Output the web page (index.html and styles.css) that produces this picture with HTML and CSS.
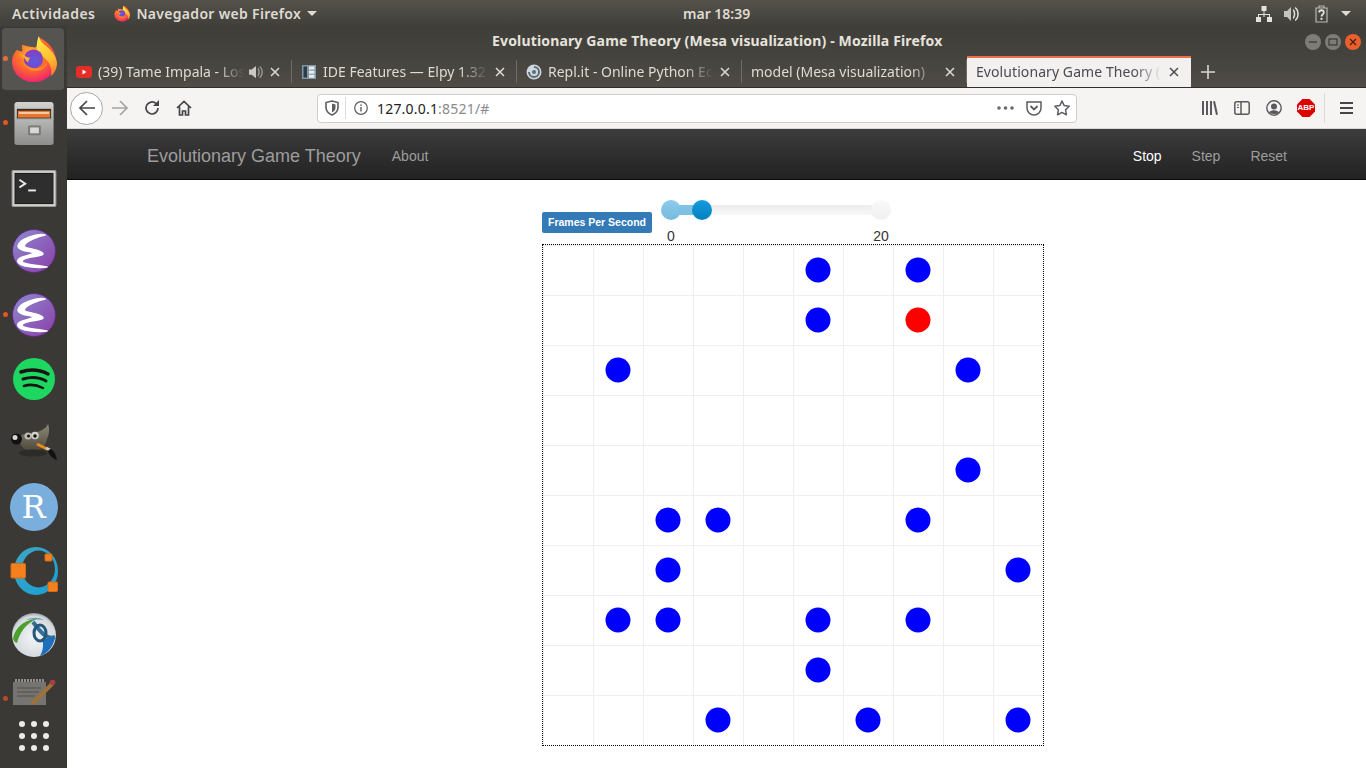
FILE: index.html
```html
<!DOCTYPE html>
<html lang="es">
<head>
<meta charset="utf-8">
<title>Evolutionary Game Theory (Mesa visualization)</title>
<link rel="stylesheet" href="styles.css">
</head>
<body>
<svg class="defs" width="0" height="0" aria-hidden="true">
  <defs>
    <radialGradient id="fx-body" cx="0.45" cy="0.35" r="0.75">
      <stop offset="0" stop-color="#ffb02e"/>
      <stop offset="0.5" stop-color="#ff6a2b"/>
      <stop offset="0.85" stop-color="#f02a6a"/>
      <stop offset="1" stop-color="#d81f8c"/>
    </radialGradient>
    <linearGradient id="fx-flame" x1="0.4" y1="0" x2="0.7" y2="1">
      <stop offset="0" stop-color="#ffe94a"/>
      <stop offset="0.6" stop-color="#ffbd2e"/>
      <stop offset="1" stop-color="#ff7a2e"/>
    </linearGradient>
    <radialGradient id="fx-globe" cx="0.55" cy="0.6" r="0.6">
      <stop offset="0" stop-color="#5a5ce0"/>
      <stop offset="1" stop-color="#8a3bc0"/>
    </radialGradient>
    <linearGradient id="emacs-bg" x1="0" y1="0" x2="1" y2="1">
      <stop offset="0" stop-color="#8d8ad0"/>
      <stop offset="1" stop-color="#8a3ea8"/>
    </linearGradient>
    <linearGradient id="cabinet" x1="0" y1="0" x2="0" y2="1">
      <stop offset="0" stop-color="#d2d2d0"/>
      <stop offset="1" stop-color="#8d8d8b"/>
    </linearGradient>
    <linearGradient id="origin-ring" x1="0" y1="0" x2="1" y2="1">
      <stop offset="0" stop-color="#3fa5c4"/>
      <stop offset="1" stop-color="#17a0d6"/>
    </linearGradient>
    <radialGradient id="globe-bg" cx="0.5" cy="0.55" r="0.6">
      <stop offset="0" stop-color="#f4f6f8"/>
      <stop offset="0.8" stop-color="#d4d9de"/>
      <stop offset="1" stop-color="#6d7378"/>
    </radialGradient>
    <linearGradient id="gimp-head" x1="0" y1="0" x2="0" y2="1">
      <stop offset="0" stop-color="#8f8975"/>
      <stop offset="1" stop-color="#4c483c"/>
    </linearGradient>
    <symbol id="firefox" viewBox="0 0 48 48">
      <path fill="url(#fx-body)" d="M12 9c-1 3-.6 5 .4 6.600C10 16.500 7.500 15 6 14.500 3 18 1 22 1 26.500 1 38.500 11 48 24 48s23-9.500 23-22C47 15 39 5 28 1c2 5 1 9-3 11-4-1-9-1-13-3z"/>
      <path fill="url(#fx-flame)" d="M29 0c1 5 4 8 8 11 6 5 11 11 11 18 0 5-3 10-6 13 1-7-1-13-5-17-3-4-9-6-10-11-.7-5 .5-10 2-14z"/>
      <path fill="#ffa32b" d="M8 19c3 0 6 2 10 1 3-1 8-3 12-1 2 1 1 3-1 3-6 0-9 3-10 6-2-4-7-5-11-9z"/>
      <circle cx="23.500" cy="24" r="10" fill="url(#fx-globe)"/>
      <path fill="#ff8a2a" d="M12 26c2 8 10 12 17 10 5-1 8-5 9-10-1 3-4 6-8 7-7 2-14-1-18-7z"/>
      <path fill="#ffb02e" d="M13 19c2 3 5 3 7 4-1 1-2 3-2 5-2-2-5-5-5-9z"/>
    </symbol>
    <symbol id="emacs" viewBox="0 0 44 44">
      <circle cx="22" cy="22" r="21.500" fill="url(#emacs-bg)" stroke="#5e2b80"/>
      <path fill="#fff" stroke="#fff" stroke-width="1.600" stroke-linejoin="round" d="M33 6C27 7 13 12 12 17 11 20 31 20 31 25 31 28 12 27 10 32 9 35 22 36 35 38 26 39 8 38 6 33 4 27 20 27 21 24 22 22 6 23 6 17 7 10 25 4 33 6z"/>
    </symbol>
  </defs>
</svg>

<header class="top-bar">
  <span class="top-activities">Actividades</span>
  <span class="top-app">
    <svg class="top-app-icon" width="16" height="17"><use href="#firefox"/></svg>
    <span class="top-app-name">Navegador web Firefox</span>
    <span class="caret"></span>
  </span>
  <span class="top-clock">mar 18:39</span>
  <span class="top-status">
    <svg width="16" height="16" viewBox="0 0 16 16" fill="#e4e2dd"><rect x="5.500" y="0" width="5" height="5"/><rect x="0" y="11" width="5" height="5"/><rect x="11" y="11" width="5" height="5"/><path d="M7.500 5h1v3h5.500v3h-1V9H8.500v2h-1V9H3v2H2V8h5.500z"/></svg>
    <svg width="16" height="16" viewBox="0 0 16 16" fill="#e4e2dd"><path d="M0 5h3l4-4v14l-4-4H0z" fill="#c6c4bf"/><path d="M9 3c3 1 3 9 0 10v-2c1-1 1-5 0-6zM11 1c5 2 5 12 0 14v-1.500c3-2 3-9 0-11z"/></svg>
    <svg width="13" height="18" viewBox="0 0 13 18"><path fill="none" stroke="#b9b7b1" stroke-width="1.200" d="M1 3h11v14H1zM4 3V1h5v2"/><path fill="none" stroke="#e4e2dd" stroke-width="1.800" d="M4.200 7.500c0-3 4.600-3 4.600 0 0 2-2.300 2-2.300 4"/><rect x="5.500" y="12.800" width="2" height="2" fill="#e4e2dd"/></svg>
    <span class="caret"></span>
  </span>
</header>

<div class="desktop">
  <nav class="dock">
    <div class="dock-item dock-active is-running"><svg width="46" height="48"><use href="#firefox"/></svg></div>
    <div class="dock-item is-running">
      <svg width="42" height="45" viewBox="0 0 42 46">
        <path fill="url(#cabinet)" d="M1 4q0-3 3-3h34q3 0 3 3v39q0 2-3 2H4q-3 0-3-2z"/>
        <rect x="3.500" y="8" width="35" height="10" fill="#33302c"/>
        <rect x="4.500" y="10" width="33" height="7" fill="#e8762d"/>
        <rect x="5.500" y="11.500" width="31" height="1.500" fill="#f7e6cf"/>
        <rect x="1" y="18" width="40" height="1" fill="#a5a5a3"/>
        <rect x="15" y="25" width="13" height="10" rx="1" fill="#7a7a78"/>
        <rect x="17" y="27" width="9" height="6" fill="#d8d8d6"/>
      </svg>
    </div>
    <div class="dock-item dock-terminal">
      <svg width="46" height="37" viewBox="0 0 46 38">
        <rect x="0.500" y="0.500" width="45" height="37" rx="1" fill="#cfcfcd" stroke="#9a9a98"/>
        <rect x="3" y="3" width="40" height="32" fill="#1c1c1c"/>
        <rect x="4" y="4" width="38" height="30" fill="#2e2e2e"/>
        <path d="M8 10l6 4-6 4" fill="none" stroke="#e8e8e8" stroke-width="2"/>
        <rect x="17" y="20" width="8" height="2" fill="#e8e8e8"/>
      </svg>
    </div>
    <div class="dock-item"><svg width="44" height="44"><use href="#emacs"/></svg></div>
    <div class="dock-item is-running"><svg width="44" height="44"><use href="#emacs"/></svg></div>
    <div class="dock-item">
      <svg width="42" height="42" viewBox="0 0 42 42">
        <circle cx="21" cy="21" r="21" fill="#1ed760"/>
        <path fill="none" stroke="#191414" stroke-linecap="round" stroke-width="3.500" d="M8 14c9-3 19-2 27 2"/>
        <path fill="none" stroke="#191414" stroke-linecap="round" stroke-width="3" d="M10 21c7-2 16-2 23 2"/>
        <path fill="none" stroke="#191414" stroke-linecap="round" stroke-width="2.500" d="M11 28c6-2 13-1 19 2"/>
      </svg>
    </div>
    <div class="dock-item">
      <svg width="48" height="40" viewBox="0 0 48 40">
        <path fill="url(#gimp-head)" d="M10 13c5-4 16-2 22-6 2-1 5-3 6-6 2 5 1 11-1 15-1 8-8 13-16 12-7-1-13-6-11-15z"/>
        <ellipse cx="23" cy="30" rx="14" ry="3.500" fill="#2c2b27"/>
        <circle cx="6.500" cy="16" r="5.500" fill="#111"/>
        <circle cx="5" cy="14.500" r="2.500" fill="#d5d8da"/>
        <circle cx="18" cy="13" r="3.500" fill="#bdbdb6"/>
        <circle cx="18.500" cy="13" r="1.500" fill="#111"/>
        <circle cx="25" cy="12.500" r="3.800" fill="#d2d2cc"/>
        <circle cx="25" cy="13" r="1.800" fill="#111"/>
        <path d="M27 21l10 5" stroke="#e88a1c" stroke-width="3"/>
        <path d="M36 25l4 2" stroke="#ccc" stroke-width="3"/>
        <path d="M40 26c4 1 6 6 7 11-4-1-8-5-9-9z" fill="#111"/>
      </svg>
    </div>
    <div class="dock-item"><span class="r-icon">R</span></div>
    <div class="dock-item">
      <svg width="48" height="50" viewBox="0 0 48 50">
        <path fill="url(#origin-ring)" fill-rule="evenodd" d="M4 25a22 24 0 1 0 44 0a22 24 0 1 0-44 0zM12 23a16.500 18.500 0 1 0 33 0a16.500 18.500 0 1 0-33 0z"/>
        <rect x="1" y="17.500" width="14.500" height="14.500" rx="1" fill="#f5801f" stroke="#d96a10"/>
        <rect x="35" y="8" width="7" height="7" rx="1" fill="#f5801f" stroke="#d96a10"/>
        <rect x="38" y="36" width="9.500" height="9.500" rx="1" fill="#f5801f" stroke="#d96a10"/>
      </svg>
    </div>
    <div class="dock-item">
      <svg width="44" height="44" viewBox="0 0 44 44">
        <circle cx="22" cy="22" r="22" fill="url(#globe-bg)"/>
        <path fill="#4ba02c" d="M1 26C3 13 14 6 28 5c-10 3-19 10-23 25q-3-1-4-4z"/>
        <path fill="#6e9fb3" d="M14 7c6-3 13-3 18 0-6-1-12-1-18 0z"/>
        <path fill="none" stroke="#2f6f9a" stroke-width="4" d="M21 9c4 5 8 11 13 14 3 2 6 2 9 1"/>
        <path fill="#1d6fbe" d="M43 24c-1 9-8 17-15 19 3-5 4-11 2-18 4 1 9 1 13-1z"/>
        <ellipse cx="28" cy="20" rx="6" ry="8" fill="none" stroke="#27587a" stroke-width="3"/>
      </svg>
    </div>
    <div class="dock-item dock-notes is-running">
      <svg width="44" height="26" viewBox="0 0 44 26">
        <rect x="1" y="3" width="33" height="23" fill="#8f8e8a"/>
        <path d="M4 3V0M7 3V0M10 3V0M13 3V0M16 3V0M19 3V0M22 3V0M25 3V0M28 3V0M31 3V0" stroke="#ddd" stroke-width="1.500"/>
        <path d="M5 9h24M5 13h22M5 17h18" stroke="#5a5954" stroke-width="1"/>
        <path d="M20 25L40 5" stroke="#c98b35" stroke-width="4"/>
        <circle cx="40.500" cy="3.500" r="2.800" fill="#d8404a"/>
      </svg>
    </div>
    <div class="dock-apps">
      <i></i><i></i><i></i><i></i><i></i><i></i><i></i><i></i><i></i>
    </div>
  </nav>

  <div class="window">
    <div class="title-bar">
      <span class="title-text">Evolutionary Game Theory (Mesa visualization) - Mozilla Firefox</span>
      <span class="win-buttons">
        <span class="win-btn"><svg width="10" height="10" viewBox="0 0 10 10"><path d="M1 5h8" stroke="#3a3935" stroke-width="1.300"/></svg></span>
        <span class="win-btn"><svg width="10" height="10" viewBox="0 0 10 10"><rect x="1" y="2" width="8" height="6" fill="none" stroke="#3a3935" stroke-width="1.200"/></svg></span>
        <span class="win-btn win-close"><svg width="10" height="10" viewBox="0 0 10 10"><path d="M2 2l6 6M8 2l-6 6" stroke="#4a2010" stroke-width="1.300"/></svg></span>
      </span>
    </div>

    <div class="tab-strip">
      <div class="tab">
        <svg class="favicon" width="16" height="12" viewBox="0 0 16 12"><rect width="16" height="12" rx="3" fill="#e52d27"/><path d="M6.500 3.500l4 2.500-4 2.500z" fill="#fff"/></svg>
        <span class="tab-title">(39) Tame Impala - Los</span>
        <svg class="tab-audio" width="14" height="14" viewBox="0 0 16 16" fill="#c9c7c2"><path d="M0 5h3l5-4v14l-5-4H0z"/><path d="M10 3c3 1 3 9 0 10v-2c1-1 1-5 0-6zM12 1c5 2 5 12 0 14v-1.500c3-2 3-9 0-11z" opacity=".7"/></svg>
        <svg class="tab-close" width="12" height="12" viewBox="0 0 12 12"><path d="M2 2l8 8M10 2l-8 8"/></svg>
      </div>
      <div class="tab">
        <svg class="favicon fav-elpy" width="14" height="14" viewBox="0 0 14 14"><rect width="14" height="14" fill="#7f98a8"/><rect x="1.500" y="1.500" width="3.500" height="11" fill="#2f3b44"/><rect x="7" y="1.500" width="5.500" height="3" fill="#e8ecef"/><rect x="7" y="5.700" width="5.500" height="3" fill="#e8ecef"/><rect x="7" y="9.800" width="5.500" height="3" fill="#e8ecef"/></svg>
        <span class="tab-title">IDE Features — Elpy 1.32</span>
        <svg class="tab-close" width="12" height="12" viewBox="0 0 12 12"><path d="M2 2l8 8M10 2l-8 8"/></svg>
      </div>
      <div class="tab">
        <svg class="favicon" width="16" height="16" viewBox="0 0 16 16"><circle cx="8" cy="8" r="7.500" fill="#cfd8de"/><path d="M8 3a5 5 0 1 1-5 5" fill="none" stroke="#5b6d78" stroke-width="2"/><circle cx="8" cy="8" r="2" fill="#5b6d78"/></svg>
        <span class="tab-title">Repl.it - Online Python Ec</span>
        <svg class="tab-close" width="12" height="12" viewBox="0 0 12 12"><path d="M2 2l8 8M10 2l-8 8"/></svg>
      </div>
      <div class="tab">
        <span class="tab-title">model (Mesa visualization)</span>
        <svg class="tab-close" width="12" height="12" viewBox="0 0 12 12"><path d="M2 2l8 8M10 2l-8 8"/></svg>
      </div>
      <div class="tab tab-current">
        <span class="tab-title">Evolutionary Game Theory (Mesa</span>
        <svg class="tab-close" width="12" height="12" viewBox="0 0 12 12"><path d="M2 2l8 8M10 2l-8 8"/></svg>
      </div>
      <svg class="tab-new" width="14" height="14" viewBox="0 0 14 14"><path d="M7 0v14M0 7h14" stroke="#d8d6d1" stroke-width="1.600"/></svg>
    </div>

    <div class="toolbar">
      <span class="back-btn">
        <svg width="18" height="18" viewBox="0 0 18 18"><path class="tb-stroke" d="M17 9H2M9 2L2 9l7 7"/></svg>
      </span>
      <svg class="tb-forward" width="18" height="18" viewBox="0 0 18 18"><path class="tb-stroke" d="M1 9h15M9 2l7 7-7 7"/></svg>
      <svg class="tb-reload" width="16" height="16" viewBox="0 0 16 16"><path class="tb-stroke" d="M14 8a6 6 0 1 1-2-4.500"/><path d="M15 0v6H9z" fill="#45454a"/></svg>
      <svg class="tb-home" width="16" height="16" viewBox="0 0 16 16"><path class="tb-stroke" d="M1 8l7-6.500L15 8M3.500 6.500V15H6.500v-4h3v4h3V6.500"/></svg>

      <div class="url-bar">
        <svg class="url-shield" width="14" height="16" viewBox="0 0 14 16"><path d="M7 1l6 1.500V8c0 3-3 6-6 7-3-1-6-4-6-7V2.500z" fill="none" stroke="#5c5c61" stroke-width="1.600"/><path d="M7 3.500L10.500 4.500V8c0 2-2 3.500-3.500 4.500z" fill="#5c5c61"/></svg>
        <span class="url-sep"></span>
        <svg class="url-info" width="14" height="14" viewBox="0 0 14 14"><circle cx="7" cy="7" r="6.300" fill="none" stroke="#5c5c61" stroke-width="1.200"/><rect x="6.300" y="6" width="1.400" height="4.500" fill="#5c5c61"/><rect x="6.300" y="3.400" width="1.400" height="1.500" fill="#5c5c61"/></svg>
        <span class="url-text">127.0.0.1<span class="url-dim">:8521/#</span></span>
        <span class="url-actions">
          <svg width="17" height="4" viewBox="0 0 17 4" fill="#6a6a6e"><circle cx="2" cy="2" r="1.800"/><circle cx="8.500" cy="2" r="1.800"/><circle cx="15" cy="2" r="1.800"/></svg>
          <svg width="16" height="15" viewBox="0 0 16 15"><path d="M1 1h14v6a7 7 0 0 1-14 0z" fill="none" stroke="#5c5c61" stroke-width="1.500"/><path d="M4.500 5L8 8.500 11.500 5" fill="none" stroke="#5c5c61" stroke-width="1.800"/></svg>
          <svg width="16" height="16" viewBox="0 0 16 16"><path d="M8 1l2.200 4.600 5 .7-3.600 3.500.8 5L8 12.400l-4.400 2.400.8-5L.8 6.300l5-.7z" fill="none" stroke="#5c5c61" stroke-width="1.500" stroke-linejoin="round"/></svg>
        </span>
      </div>

      <div class="tb-right">
        <svg width="16" height="14" viewBox="0 0 16 14" fill="#5a5a5e"><rect x="0" y="0" width="2" height="14"/><rect x="4" y="0" width="2" height="14"/><rect x="8" y="0" width="2" height="14"/><path d="M11 .5l2-.5 3 13.500-2 .5z"/></svg>
        <svg width="16" height="14" viewBox="0 0 16 14"><rect x="0.800" y="0.800" width="14.400" height="12.400" rx="2" fill="none" stroke="#5a5a5e" stroke-width="1.500"/><path d="M7 1v12" stroke="#5a5a5e" stroke-width="1.500"/><path d="M3 4h2M3 6.500h2" stroke="#5a5a5e"/></svg>
        <svg width="16" height="16" viewBox="0 0 16 16"><circle cx="8" cy="8" r="7.200" fill="none" stroke="#5a5a5e" stroke-width="1.400"/><circle cx="8" cy="6.500" r="3" fill="#5a5a5e"/><path d="M3 12.500c2-3 8-3 10 0-2 2-8 2-10 0z" fill="#5a5a5e"/></svg>
        <span class="abp-icon">ABP</span>
        <span class="tb-divider"></span>
        <svg width="13" height="12" viewBox="0 0 13 12" fill="#45454a"><rect width="13" height="2"/><rect y="5" width="13" height="2"/><rect y="10" width="13" height="2"/></svg>
      </div>
    </div>

    <div class="page">
      <div class="navbar">
        <div class="navbar-inner">
          <a class="navbar-brand">Evolutionary Game Theory</a>
          <a class="nav-link">About</a>
          <div class="nav-right">
            <a class="nav-link nav-on">Stop</a>
            <a class="nav-link">Step</a>
            <a class="nav-link">Reset</a>
          </div>
        </div>
      </div>

      <main class="viz">
        <div class="controls">
          <span class="fps-label">Frames Per Second</span>
          <div class="slider">
            <div class="slider-track"><div class="slider-fill"></div></div>
            <span class="slider-handle handle-min"></span>
            <span class="slider-handle handle-value"></span>
            <span class="slider-handle handle-max"></span>
            <span class="slider-tick tick-min">0</span>
            <span class="slider-tick tick-max">20</span>
          </div>
        </div>

        <svg class="world" width="502" height="502" viewBox="0 0 500 500">
          <defs>
            <pattern id="cell" width="50" height="50" patternUnits="userSpaceOnUse">
              <path d="M.5 0v50M0 .5h50" fill="none" stroke="#eee"/>
            </pattern>
          </defs>
          <rect width="500" height="500" fill="url(#cell)"/>
          <g fill="#00f">
            <circle cx="275" cy="25" r="12.500"/>
            <circle cx="375" cy="25" r="12.500"/>
            <circle cx="275" cy="75" r="12.500"/>
            <circle cx="375" cy="75" r="12.500" fill="#f00"/>
            <circle cx="75" cy="125" r="12.500"/>
            <circle cx="425" cy="125" r="12.500"/>
            <circle cx="425" cy="225" r="12.500"/>
            <circle cx="125" cy="275" r="12.500"/>
            <circle cx="175" cy="275" r="12.500"/>
            <circle cx="375" cy="275" r="12.500"/>
            <circle cx="125" cy="325" r="12.500"/>
            <circle cx="475" cy="325" r="12.500"/>
            <circle cx="75" cy="375" r="12.500"/>
            <circle cx="125" cy="375" r="12.500"/>
            <circle cx="275" cy="375" r="12.500"/>
            <circle cx="375" cy="375" r="12.500"/>
            <circle cx="275" cy="425" r="12.500"/>
            <circle cx="175" cy="475" r="12.500"/>
            <circle cx="325" cy="475" r="12.500"/>
            <circle cx="475" cy="475" r="12.500"/>
          </g>
        </svg>
      </main>
    </div>
  </div>
</div>
</body>
</html>
```

FILE: styles.css
```css
* {
  box-sizing: border-box;
}
html, body {
  margin: 0;
  height: 100%;
  overflow: hidden;
}
body {
  font-family: "Noto Sans", "Open Sans", sans-serif;
  background: #3a3935;
}
.defs {
  position: absolute;
}

/* gnome top bar */
.top-bar {
  height: 27px;
  display: flex;
  align-items: center;
  position: relative;
  padding-left: 12px;
  background: linear-gradient(#55524b, #3f3e39);
  color: #dfdbd2;
  font-size: 14px;
  font-weight: 600;
}
.top-activities {
  letter-spacing: 0.45px;
}
.top-app {
  display: flex;
  align-items: center;
  margin-left: 19px;
  gap: 6px;
}
.top-app-name {
  letter-spacing: 0.3px;
}
.caret {
  width: 0;
  height: 0;
  border-left: 5px solid transparent;
  border-right: 5px solid transparent;
  border-top: 5px solid #dfdbd2;
}
.top-clock {
  position: absolute;
  left: 683px;
}
.top-status {
  display: flex;
  align-items: center;
  gap: 13px;
  margin-left: auto;
  padding-right: 15px;
}
.top-status svg:nth-child(2) {
  margin: 0 2px 0 -1px;
}

.desktop {
  display: flex;
  height: 741px;
}

/* launcher */
.dock {
  width: 67px;
  flex-shrink: 0;
  background: #3a3935;
  display: flex;
  flex-direction: column;
  overflow: hidden;
}
.dock-item {
  height: 64px;
  flex-shrink: 0;
  display: flex;
  align-items: center;
  justify-content: center;
  position: relative;
}
.dock-active::after {
  content: "";
  position: absolute;
  inset: 1px 3px 1px 2px;
  background: rgba(255, 255, 255, 0.14);
  border-radius: 4px;
  z-index: 0;
}
.dock-item svg {
  position: relative;
  z-index: 1;
}
.dock-terminal {
  padding-top: 3px;
}
.is-running::before {
  content: "";
  position: absolute;
  left: 3px;
  top: 29px;
  width: 5px;
  height: 5px;
  border-radius: 50%;
  background: #e95420;
}
.r-icon {
  width: 48px;
  height: 48px;
  border-radius: 50%;
  background: #7aaedd;
  color: #fff;
  font: 32px/48px "DejaVu Serif", serif;
  text-align: center;
}
.dock-notes {
  height: 50px;
  opacity: 0.7;
}
.dock-apps {
  display: grid;
  grid-template-columns: repeat(3, 6px);
  gap: 6px;
  justify-content: center;
  margin-top: 4px;
}
.dock-apps i {
  width: 6px;
  height: 6px;
  border-radius: 50%;
  background: #ecebe8;
}

/* firefox window */
.window {
  flex: 1;
  min-width: 0;
  display: flex;
  flex-direction: column;
}
.title-bar {
  height: 29px;
  display: flex;
  align-items: center;
  position: relative;
  background: linear-gradient(#3f3e39, #45433e);
  color: #e6e3dc;
  font-size: 14px;
  font-weight: 700;
}
.title-text {
  margin-left: 425px;
  margin-bottom: 2px;
  letter-spacing: 0.16px;
}
.win-buttons {
  display: flex;
  gap: 4px;
  margin-left: auto;
  padding-right: 5px;
}
.win-btn {
  width: 16px;
  height: 16px;
  border-radius: 50%;
  background: #7e7c76;
  display: flex;
  align-items: center;
  justify-content: center;
}
.win-close {
  background: #e9602d;
}

.tab-strip {
  height: 32px;
  display: flex;
  align-items: stretch;
  background: linear-gradient(#45433e, #4f4c46);
  border-bottom: 1px solid #2f2e2a;
  color: #dedbd3;
  font-size: 14px;
}
.tab {
  width: 225px;
  flex-shrink: 0;
  display: flex;
  align-items: center;
  padding: 0 11px 0 9px;
  position: relative;
}
.tab::after {
  content: "";
  position: absolute;
  right: 0;
  top: 4px;
  bottom: 4px;
  width: 1px;
  background: #6f6c65;
}
.tab-current {
  width: 224px;
  padding-bottom: 2px;
  background: #f2f1f0;
  color: #4a4a52;
  border-top: 2px solid #e9704a;
  letter-spacing: 0.08px;
}
.tab-current::after {
  display: none;
}
.favicon {
  flex-shrink: 0;
  margin-right: 6px;
}
.fav-elpy {
  margin: 0 7px 0 1px;
}
.tab-title {
  flex: 1;
  min-width: 0;
  overflow: hidden;
  white-space: nowrap;
  -webkit-mask-image: linear-gradient(to left, transparent, #000 28px);
  mask-image: linear-gradient(to left, transparent, #000 28px);
}
.tab-audio {
  flex-shrink: 0;
  margin-left: 4px;
}
.tab-close {
  flex-shrink: 0;
  margin-left: 6px;
}
.tab-close path {
  stroke: #dedbd3;
  stroke-width: 1.500;
  fill: none;
}
.tab-current .tab-close path {
  stroke: #4a4a52;
}
.tab-new {
  align-self: center;
  margin-left: 10px;
}

.toolbar {
  height: 41px;
  display: flex;
  align-items: center;
  background: #f5f4f3;
  border-bottom: 1px solid #d8d7d5;
  padding-left: 4px;
}
.tb-stroke {
  fill: none;
  stroke: #45454a;
  stroke-width: 1.700;
}
.back-btn {
  width: 33px;
  height: 33px;
  margin-left: -1px;
  border-radius: 50%;
  background: #fff;
  border: 1px solid #a8a8a8;
  display: flex;
  align-items: center;
  justify-content: center;
}
.tb-forward {
  margin-left: 8px;
  opacity: 0.45;
}
.tb-reload {
  margin-left: 15px;
}
.tb-home {
  margin-left: 16px;
}
.url-bar {
  width: 760px;
  height: 29px;
  margin-left: 125px;
  display: flex;
  align-items: center;
  background: #fff;
  border: 1px solid #cfcecc;
  border-radius: 4px;
  padding: 0 6px 0 7px;
  font-size: 14px;
  color: #222;
}
.url-sep {
  width: 1px;
  height: 22px;
  margin-left: 6px;
  background: #dcdbd9;
}
.url-info {
  margin-left: 8px;
}
.url-text {
  margin-left: 9px;
  letter-spacing: 0.2px;
}
.url-dim {
  color: #8a8a8e;
}
.url-actions {
  margin-left: auto;
  display: flex;
  align-items: center;
  gap: 12px;
}
.tb-right {
  display: flex;
  align-items: center;
  margin-left: 125px;
  gap: 16px;
}
.abp-icon {
  width: 18px;
  height: 18px;
  margin: 0 -1px;
  background: #d00;
  color: #fff;
  font: 700 8px/18px "Liberation Sans", sans-serif;
  text-align: center;
  clip-path: polygon(30% 0, 70% 0, 100% 30%, 100% 70%, 70% 100%, 30% 100%, 0 70%, 0 30%);
}
.tb-divider {
  width: 1px;
  height: 30px;
  background: #dcdbd9;
  margin-left: -6px;
  margin-right: -1px;
}

/* the page itself, bootstrap navbar look */
.page {
  flex: 1;
  background: #fff;
  font-family: "Liberation Sans", Arial, sans-serif;
  color: #333;
  font-size: 14px;
}
.navbar {
  height: 51px;
  background: linear-gradient(#3c3c3c, #222);
  border-bottom: 1px solid #080808;
}
.navbar-inner {
  width: 1170px;
  margin-left: 65px;
  height: 50px;
  padding-top: 4px;
  display: flex;
  align-items: center;
}
.navbar-brand {
  padding: 0 16px 0 15px;
  font-size: 18px;
  color: #9d9d9d;
}
.nav-link {
  padding: 0 15px;
  color: #9d9d9d;
}
.nav-on {
  color: #fff;
}
.nav-right {
  margin-left: auto;
  display: flex;
}

.viz {
  width: 502px;
  margin-left: 475px;
  padding-top: 20px;
}
.controls {
  display: flex;
  align-items: flex-start;
  height: 44px;
}
.fps-label {
  margin-top: 12px;
  width: 110px;
  height: 21px;
  background: #337ab7;
  color: #fff;
  border-radius: 2px;
  font-size: 10.500px;
  font-weight: 700;
  line-height: 21px;
  text-align: center;
}
.slider {
  position: relative;
  width: 210px;
  height: 44px;
  margin-left: 19px;
}
.slider-track {
  position: absolute;
  left: 0;
  right: 0;
  top: 5px;
  height: 10px;
  background: linear-gradient(#ececec, #f8f8f8);
}
.slider-fill {
  width: 31px;
  height: 10px;
  background: #7fc1e3;
}
.slider-handle {
  position: absolute;
  top: 0;
  width: 20px;
  height: 20px;
  border-radius: 50%;
}
.handle-min {
  left: -10px;
  background: linear-gradient(#8ccbec, #76bbde);
}
.handle-value {
  left: 21px;
  background: linear-gradient(#149bdf, #0480be);
}
.handle-max {
  left: 200px;
  background: linear-gradient(#f9f9f9, #f0f0f0);
}
.slider-tick {
  position: absolute;
  top: 28px;
  font-size: 14px;
  line-height: 17px;
  transform: translateX(-50%);
}
.tick-min {
  left: 0;
}
.tick-max {
  left: 210px;
}
.world {
  display: block;
  border: 1px dotted #000;
}
```
